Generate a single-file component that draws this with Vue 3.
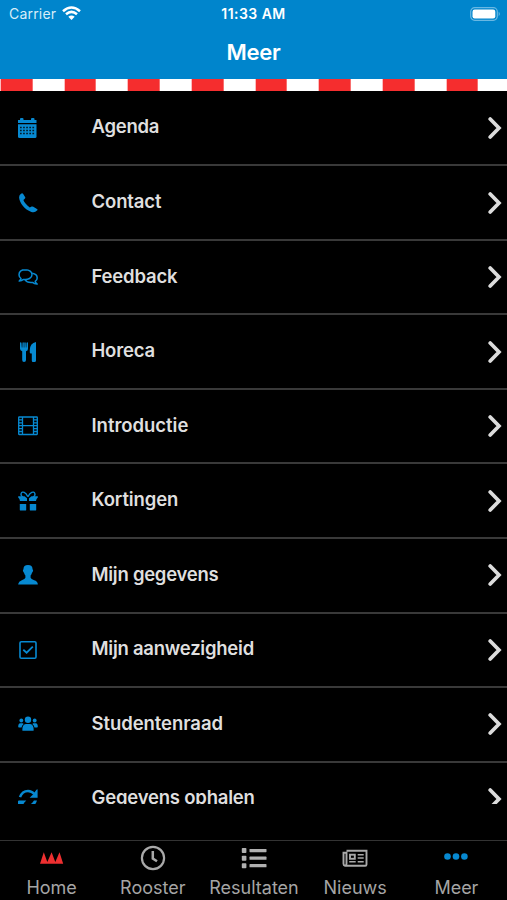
<script setup>
const items = [
  { label: 'Agenda', icon: 'calendar', spacing: -0.25 },
  { label: 'Contact', icon: 'phone', spacing: -0.12 },
  { label: 'Feedback', icon: 'chat', spacing: -0.18 },
  { label: 'Horeca', icon: 'food', spacing: -0.18 },
  { label: 'Introductie', icon: 'film', spacing: -0.03 },
  { label: 'Kortingen', icon: 'gift', spacing: -0.1 },
  { label: 'Mijn gegevens', icon: 'person', spacing: -0.27 },
  { label: 'Mijn aanwezigheid', icon: 'check', spacing: -0.25 },
  { label: 'Studentenraad', icon: 'group', spacing: -0.06 },
  { label: 'Gegevens ophalen', icon: 'refresh', spacing: -0.2 }
]
const tabs = [
  { label: 'Home', icon: 'home' },
  { label: 'Rooster', icon: 'clock' },
  { label: 'Resultaten', icon: 'list' },
  { label: 'Nieuws', icon: 'news' },
  { label: 'Meer', icon: 'more' }
]
</script>

<template>
  <div class="screen">
    <header class="header">
      <div class="status">
        <div class="carrier">
          <span>Carrier</span>
          <svg class="wifi" viewBox="0 0 19 15">
            <path d="M1 5.2Q9.500-2.300 18 5.200M4 8.300Q9.500 3.500 15 8.300" fill="none" stroke="#fff" stroke-width="2.500" />
            <path d="M6.300 10.700Q9.500 8.200 12.700 10.700L9.500 14Z" fill="#fff" />
          </svg>
        </div>
        <div class="time">11:33 AM</div>
        <svg class="battery" viewBox="0 0 32 14">
          <rect x="0.700" y="0.700" width="26.600" height="12.600" rx="4" fill="none" stroke="#69b8e3" stroke-width="1.200" />
          <rect x="2.500" y="2.500" width="22.800" height="9" rx="2.200" fill="#fff" />
          <path d="M28.700 4.800Q31 7 28.700 9.200Z" fill="#69b8e3" />
        </svg>
      </div>
      <h1 class="title">Meer</h1>
    </header>
    <div class="stripes"></div>
    <main class="list">
      <div v-for="item in items" :key="item.label" class="row">
        <svg class="icon" viewBox="0 0 20 20">
          <g v-if="item.icon === 'calendar'" fill="#0789d1">
            <path d="M0 2H2V1Q2 0 3 0H4.500Q5.500 0 5.500 1V2H13V1Q13 0 14 0H15.500Q16.500 0 16.500 1V2H18.500V5H0Z" />
            <path d="M0 6.300H18.500V18.500Q18.500 20 17 20H1.500Q0 20 0 18.500Z" />
            <path d="M2 9.500H16.500M2 12.500H16.500M2 15.500H16.500" fill="none" stroke="#000" stroke-width="1.300" stroke-dasharray="1.700 1.400" opacity=".8" />
          </g>
          <path v-else-if="item.icon === 'phone'" d="M3 .8Q4.300-.3 5.200 1L7.200 4.300Q7.700 5.200 6.500 6L5.400 6.900Q6.500 10.300 11.800 14.600L13.600 13.600Q14.400 13.200 15.300 13.700L19 16Q20 16.700 19 17.600Q16.800 20 13.400 18.900C6.500 16.400 1.400 9.400 1.100 4.400Q1 2.300 3 .8Z" fill="#0789d1" />
          <g v-else-if="item.icon === 'chat'" fill="none" stroke="#0789d1" stroke-width="1.500" stroke-linejoin="round">
            <path d="M7.500 2.800C3.500 2.800 1 4.900 1 7.800C1 9.600 1.800 10.700 3 11.500Q2.700 12.900 1.200 14Q3.600 13.900 5.500 12.400C10.200 13 14 10.900 14 7.800C14 4.800 11.300 2.800 7.500 2.800Z" />
            <path d="M14.200 6.300C17.500 6.800 19.200 8.500 19.200 10.900Q19.200 13 17.200 14.400Q17.500 15.800 19.200 17Q16.300 17.100 14.500 15.400C10.900 15.800 8.300 14.700 7 12.600" />
          </g>
          <g v-else-if="item.icon === 'food'" fill="#0789d1">
            <path d="M2 1Q2 .3 2.700 .3Q3.400 .3 3.500 1L3.800 5.500H4.300L4.500 1Q4.500 .3 5.100 .3Q5.800 .3 5.800 1V5.500H6.300V1Q6.400 .3 7 .3Q7.700 .3 7.700 1L7.900 5.500H8.300L8.500 1Q8.700 .3 9.300 .3Q10 .3 10 1V6.700Q10 8.700 8 9.200V18Q8 20 6 20Q4.200 20 4.200 18V9.200Q2 8.500 2 6.700Z" />
            <path d="M18 0V18.500Q18 20 16.400 20H15Q13.800 20 13.800 18.500V11.600H12.800Q11.800 11.600 11.800 10.500V8Q12 1.200 18 0Z" />
          </g>
          <g v-else-if="item.icon === 'film'" fill="none" stroke="#0789d1" stroke-width="1.300">
            <rect x=".7" y="1" width="18.600" height="17.500" rx=".5" />
            <path d="M4.500 1V18.500M15.500 1V18.500M4.500 9.700H15.500" />
            <path d="M.6 3.900H4.500M.6 6.800H4.500M.6 9.700H4.500M.6 12.600H4.500M.6 15.500H4.500M15.500 3.900H19.400M15.500 6.800H19.400M15.500 9.700H19.400M15.500 12.600H19.400M15.500 15.500H19.400" />
          </g>
          <g v-else-if="item.icon === 'gift'" fill="#0789d1">
            <path d="M9.800 5.800C8 1 4.300-.2 3.200 2.300Q2.300 4.700 4.900 6M10 5.800C12 1 15.700-.2 16.800 2.300Q17.700 4.700 15.100 6" fill="none" stroke="#0789d1" stroke-width="1.300" />
            <path d="M.2 5.300H6.500L9 7.200V10H2Q1.800 7.600 .2 6.500ZM19.800 5.300H13.500L11 7.200V10H18Q18.200 7.600 19.800 6.500Z" />
            <rect x="1.800" y="13" width="6.400" height="6.500" rx=".4" /><rect x="11.800" y="13" width="6.400" height="6.500" rx=".4" />
          </g>
          <path v-else-if="item.icon === 'person'" d="M5.400 4.400Q5.400 .1 10 .1Q14.600 .1 14.600 4.400Q15.400 4.700 15 6Q14.700 7.200 14 7.700Q13.400 9.600 12.600 10.500V12.800Q13 14.200 16.200 15.200Q19.500 16.200 19.800 19V19.600H.2V19Q.6 16.200 3.800 15.200Q7 14.200 7.400 12.800V10.500Q6.600 9.600 6 7.700Q5.300 7.200 5 6Q4.600 4.700 5.400 4.400Z" fill="#0789d1" />
          <g v-else-if="item.icon === 'check'" fill="none" stroke="#0789d1">
            <rect x="2" y="1.800" width="16" height="16.400" rx="1.300" stroke-width="1.600" />
            <path d="M5.300 9.800L8.600 12.700L14.800 6.600" stroke-width="1.800" />
          </g>
          <g v-else-if="item.icon === 'group'" fill="#0789d1">
            <circle cx="10" cy="5.800" r="3.200" /><circle cx="3.300" cy="6.500" r="1.900" /><circle cx="16.700" cy="6.500" r="1.900" />
            <path d="M4.300 16.200Q4.300 10.300 7.800 10H12.200Q15.700 10.300 15.700 16.200Q15.600 16.800 14.700 16.800H5.300Q4.400 16.800 4.300 16.200ZM.2 12.800Q.2 9.300 2.200 9.200H4.700L5.700 10.100Q3.900 11.200 3.500 13.500H1Q.2 13.500 .2 12.800ZM19.800 12.800Q19.800 9.300 17.800 9.200H15.300L14.300 10.100Q16.100 11.200 16.500 13.500H19Q19.800 13.500 19.800 12.800Z" />
          </g>
          <g v-else fill="#0789d1">
            <path d="M2 8.200C3.500 4 6.600 1.900 10 1.900Q13.800 1.900 16.400 5" fill="none" stroke="#0789d1" stroke-width="2.500" />
            <path d="M19.600 .2V8.800H11.600L15 5.400L18.400 .8Z" />
            <path d="M0 12.300Q0 11.400 1 11.400H8.300L5.500 14.400Q11 19 16 11.400H19Q16.500 19 10 19Q6 19 3.500 16.300L0 19.500Z" />
          </g>
        </svg>
        <span class="label" :style="{ letterSpacing: item.spacing + 'px' }">{{ item.label }}</span>
        <svg class="chevron" viewBox="0 0 14 22">
          <path d="M2.200 2L11 11L2.200 20" fill="none" stroke="#dcdcdc" stroke-width="3.700" stroke-linecap="round" stroke-linejoin="miter" />
        </svg>
      </div>
    </main>
    <nav class="tabs">
      <div v-for="tab in tabs" :key="tab.label" class="tab">
        <svg class="tab-icon" viewBox="0 0 26 26">
          <path v-if="tab.icon === 'home'" d="M1 18.800L4.800 7.300L8.300 17L12.600 7.300L16.300 17L20.500 7.300L24.200 18.800Z" fill="#ed2f30" />
          <g v-else-if="tab.icon === 'clock'" fill="none" stroke="#a9a9a9" stroke-width="2.200">
            <circle cx="13" cy="13" r="11.100" />
            <path d="M12.800 6V13.500L17 16.200" stroke-width="2.500" />
          </g>
          <g v-else-if="tab.icon === 'list'" fill="#b0b0b0">
            <rect x=".8" y="3" width="4.600" height="5" rx=".8" /><rect x=".8" y="10.700" width="4.600" height="5" rx=".8" /><rect x=".8" y="18.200" width="4.600" height="5" rx=".8" />
            <rect x="8.500" y="4" width="17" height="3.200" rx=".6" /><rect x="8.500" y="11.600" width="17" height="3.200" rx=".6" /><rect x="8.500" y="19.100" width="17" height="3.200" rx=".6" />
          </g>
          <g v-else-if="tab.icon === 'news'" fill="none" stroke="#a9a9a9" stroke-width="1.900">
            <path d="M4.500 5.800H24.500V19.500Q24.500 20.800 23.200 20.800H3Q1.500 20.500 1.500 18.800V7.800H4.500V18.800Q4.500 20.500 3 20.800" />
            <rect x="8" y="9.700" width="4.800" height="4.100" />
            <path d="M15.700 9.800H21.700M15.700 13H21.700M15.700 16.800H21.700M7.200 16.800H13.700" stroke-width="1.600" />
          </g>
          <g v-else fill="#0789d1"><circle cx="4.500" cy="11.500" r="3.300" /><circle cx="13" cy="11.500" r="3.300" /><circle cx="21.400" cy="11.500" r="3.300" /></g>
        </svg>
        <span>{{ tab.label }}</span>
      </div>
    </nav>
  </div>
</template>

<style>
body { margin: 0; background: #000; }
</style>
<style scoped>
* { box-sizing: border-box; }
.screen { width: 507px; height: 900px; display: flex; flex-direction: column; background: #000; overflow: hidden; font-family: Inter, sans-serif; }
.header { height: 79px; flex: none; background: #0085cc; color: #fff; }
.status { height: 27px; display: grid; grid-template-columns: 1fr auto 1fr; align-items: center; padding: 0 5px 0 9px; font-size: 14px; }
.carrier { display: flex; align-items: center; gap: 6px; color: #d8edf8; letter-spacing: .2px; }
.wifi { width: 19px; height: 15px; margin-top: -1px; }
.time { font-weight: 600; letter-spacing: .45px; margin-right: 4px; }
.battery { width: 32px; height: 14px; justify-self: end; }
.title { margin: 11px 0 0; font-size: 22px; line-height: 29px; font-weight: 600; text-align: center; letter-spacing: -.3px; }
.stripes { height: 12px; flex: none; background: repeating-linear-gradient(90deg, #f52d2e 0 31.800px, #fff 31.800px 63.650px); background-position: .7px 0; }
.list { height: 713px; flex: none; overflow: hidden; padding-top: .7px; }
.row { height: 74.560px; display: flex; align-items: center; border-bottom: 2px solid #393939; padding: 0 5px 0 18px; }
.icon { width: 20px; height: 20px; flex: none; }
.label { margin-left: 53.500px; flex: 1; color: #dfdfdf; font-size: 18.500px; line-height: 24px; font-weight: 600; padding-bottom: 3px; }
.chevron { width: 14px; height: 22px; }
.tabs { margin-top: 36px; height: 60px; flex: none; border-top: 1px solid #333; display: grid; grid-template-columns: repeat(5, 1fr); padding-left: 1px; }
.tab { display: flex; flex-direction: column; align-items: center; padding-top: 4px; color: #a5a5a5; font-size: 18px; line-height: 24px; }
.tab-icon { width: 26px; height: 26px; margin-bottom: 5px; flex: none; }
</style>
